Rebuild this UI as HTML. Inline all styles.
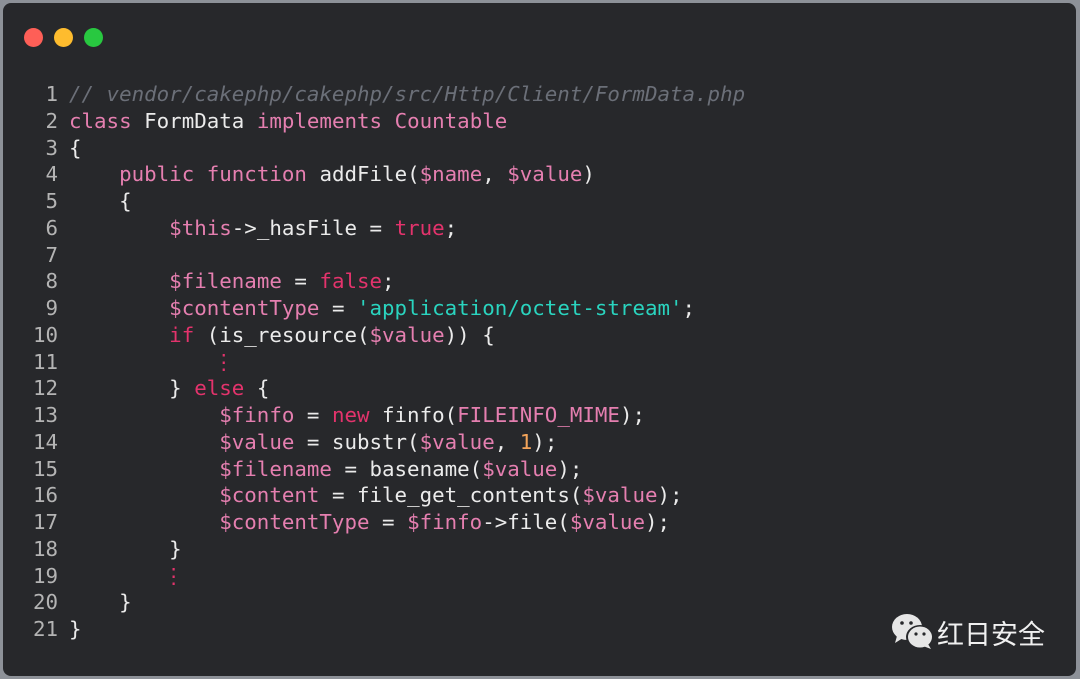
<!DOCTYPE html>
<html><head><meta charset="utf-8"><style>
html,body{margin:0;padding:0;width:1080px;height:679px;background:#8d9198;overflow:hidden}
.win{position:absolute;left:3px;top:3px;width:1073px;height:673px;background:#27282b;border-radius:8px}
.dot{position:absolute;top:25px;width:19px;height:19px;border-radius:50%}
pre{position:absolute;left:0;top:78px;margin:0;font-family:"DejaVu Sans Mono","Liberation Mono",monospace;font-size:20.8px;line-height:26.75px;color:#ebebeb}
.n{display:inline-block;width:55px;text-align:right;color:#b4b4b4;margin-right:11px}
.c{color:#6b6f78;font-style:italic}.k{color:#e57fb0}.r{color:#e3336c}.s{color:#2ad4bf}.o{color:#f3a45a}
.d{display:inline-block;margin-left:-6px}
.wm{position:absolute;left:937px;top:613px;font-family:"Liberation Sans","Noto Sans CJK SC",sans-serif;font-size:27px;color:#f0f0f0}
</style></head><body>
<div class="win">
<div class="dot" style="left:21px;background:#fe5f57"></div>
<div class="dot" style="left:51px;background:#febc2e"></div>
<div class="dot" style="left:81px;background:#28c840"></div>
<pre><span class="n">1</span><span class="c">// vendor/cakephp/cakephp/src/Http/Client/FormData.php</span>
<span class="n">2</span><span class="k">class</span> FormData <span class="k">implements</span> <span class="k">Countable</span>
<span class="n">3</span>{
<span class="n">4</span>    <span class="k">public</span> <span class="k">function</span> addFile(<span class="k">$name</span>, <span class="k">$value</span>)
<span class="n">5</span>    {
<span class="n">6</span>        <span class="k">$this</span>-&gt;_hasFile = <span class="r">true</span>;
<span class="n">7</span>
<span class="n">8</span>        <span class="k">$filename</span> = <span class="r">false</span>;
<span class="n">9</span>        <span class="k">$contentType</span> = <span class="s">'application/octet-stream'</span>;
<span class="n">10</span>        <span class="r">if</span> (is_resource(<span class="k">$value</span>)) {
<span class="n">11</span>            <span class="r d">⋮</span>
<span class="n">12</span>        } <span class="r">else</span> {
<span class="n">13</span>            <span class="k">$finfo</span> = <span class="r">new</span> finfo(<span class="k">FILEINFO_MIME</span>);
<span class="n">14</span>            <span class="k">$value</span> = substr(<span class="k">$value</span>, <span class="o">1</span>);
<span class="n">15</span>            <span class="k">$filename</span> = basename(<span class="k">$value</span>);
<span class="n">16</span>            <span class="k">$content</span> = file_get_contents(<span class="k">$value</span>);
<span class="n">17</span>            <span class="k">$contentType</span> = <span class="k">$finfo</span>-&gt;file(<span class="k">$value</span>);
<span class="n">18</span>        }
<span class="n">19</span>        <span class="r d">⋮</span>
<span class="n">20</span>    }
<span class="n">21</span>}</pre>
<svg style="position:absolute;left:888px;top:609px" width="46" height="40" viewBox="0 0 46 40">
<ellipse cx="16" cy="15" rx="15" ry="13" fill="#e6e6e6"/><path d="M6 24 L4 31 L12 26Z" fill="#e6e6e6"/>
<ellipse cx="29" cy="25" rx="14" ry="12" fill="#27282b"/>
<ellipse cx="29" cy="25" rx="12" ry="10.5" fill="#e6e6e6"/><path d="M37 32 L40 37 L32 34Z" fill="#e6e6e6"/>
<circle cx="11" cy="11" r="1.8" fill="#27282b"/><circle cx="20" cy="11" r="1.8" fill="#27282b"/>
<circle cx="25" cy="22" r="1.6" fill="#27282b"/><circle cx="33" cy="22" r="1.6" fill="#27282b"/>
</svg>
</div>
<div class="wm">红日安全</div>
</body></html>
